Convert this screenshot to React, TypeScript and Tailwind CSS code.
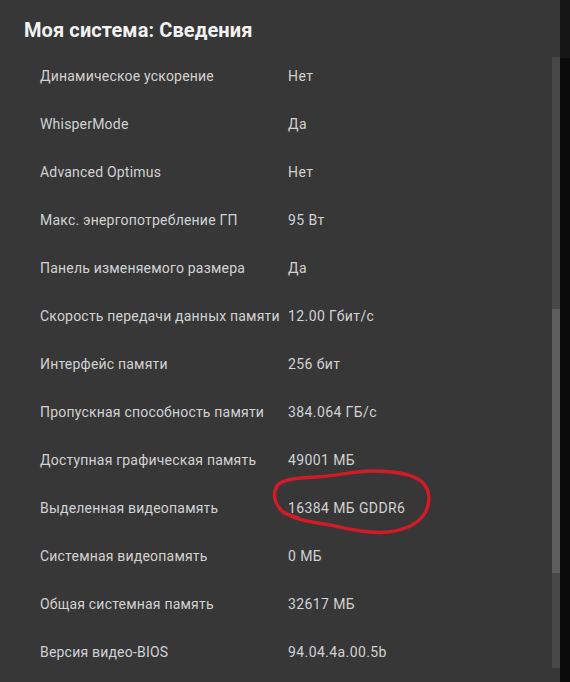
import React from "react";

const rows: [string, string][] = [
  ["Динамическое ускорение", "Нет"],
  ["WhisperMode", "Да"],
  ["Advanced Optimus", "Нет"],
  ["Макс. энергопотребление ГП", "95 Вт"],
  ["Панель изменяемого размера", "Да"],
  ["Скорость передачи данных памяти", "12.00 Гбит/с"],
  ["Интерфейс памяти", "256 бит"],
  ["Пропускная способность памяти", "384.064 ГБ/с"],
  ["Доступная графическая память", "49001 МБ"],
  ["Выделенная видеопамять", "16384 МБ GDDR6"],
  ["Системная видеопамять", "0 МБ"],
  ["Общая системная память", "32617 МБ"],
  ["Версия видео-BIOS", "94.04.4a.00.5b"],
];

export default function App() {
  return (
    <div
      className="relative flex w-[570px] h-[682px] overflow-hidden bg-[#373737]"
      style={{ fontFamily: "Roboto, 'Noto Sans', sans-serif" }}
    >
      <div className="flex-1 flex flex-col pl-[24px]">
        <div className="pt-[17px] h-[52px]">
          <h1 className="text-[20px] leading-[26px] font-bold text-[#f2f2f2] tracking-[0.1px]">
            Моя система: Сведения
          </h1>
        </div>
        <div className="flex flex-col pl-[16px]">
          {rows.map(([k, v]) => (
            <div key={k} className="flex items-center h-[48px] text-[14px] text-[#d2d2d2] tracking-[0.2px]">
              <div className="w-[248px] shrink-0 whitespace-nowrap">{k}</div>
              <div className="whitespace-nowrap tracking-[0.4px]">{v}</div>
            </div>
          ))}
        </div>
      </div>
      <div className="w-[8px] flex flex-col">
        <div className="h-[57px]" />
        <div className="flex flex-col bg-[#474747] h-[611px]">
          <div className="h-[252px]" />
          <div className="h-[264px] bg-[#5e5e5e]" />
        </div>
      </div>
      <div className="w-[10px] flex flex-col bg-[#0b0b0b]">
        <div className="h-[58px] bg-[#161616]" />
      </div>
      <svg
        className="absolute left-0 top-0 pointer-events-none"
        width="570"
        height="682"
        viewBox="0 0 570 682"
      >
        <path
          d="M298,518 C292,516 286,514 283,512 C275,505 272,494 277,486 C282,479 298,478 316,477 C338,476 352,471 372,471 C394,471 413,474 422,482 C432,491 430,507 423,516 C416,525 404,530 388,532 C366,534 346,528 330,525 C314,522 300,521 291,516"
          fill="none"
          stroke="#d11c28"
          strokeWidth="3.5"
          strokeLinecap="round"
          strokeLinejoin="round"
        />
      </svg>
    </div>
  );
}
